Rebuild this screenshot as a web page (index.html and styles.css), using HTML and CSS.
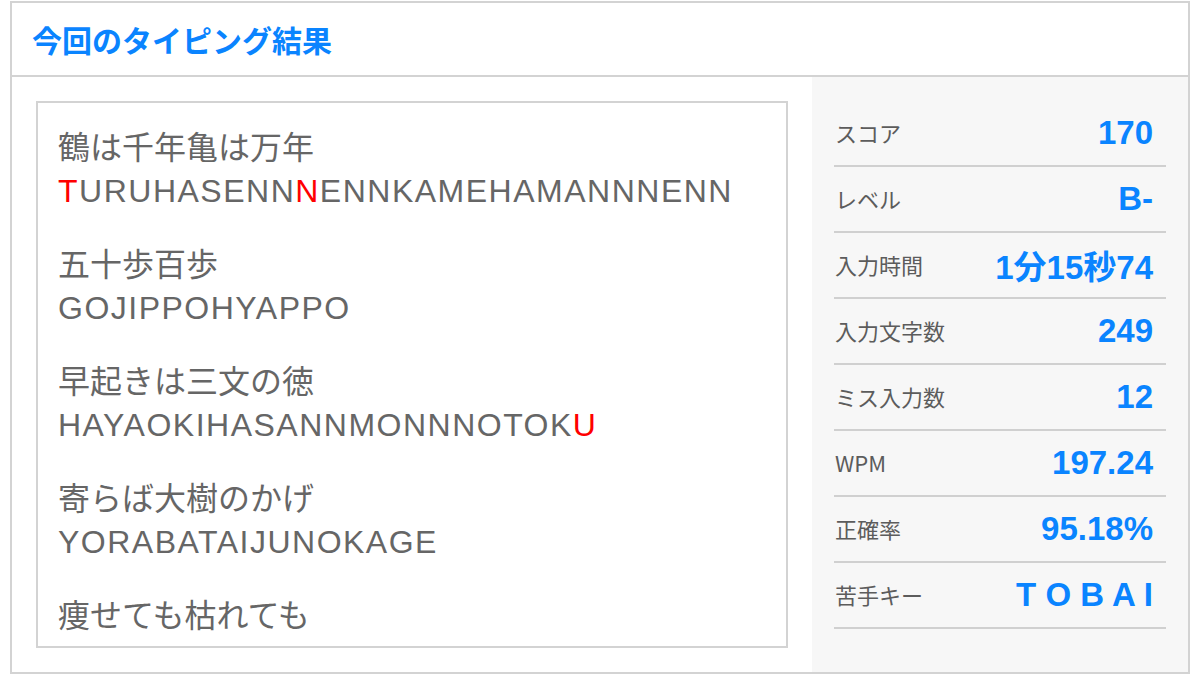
FILE: index.html
```html
<!DOCTYPE html>
<html lang="ja">
<head>
<meta charset="utf-8">
<title>今回のタイピング結果</title>
<link rel="stylesheet" href="styles.css">
</head>
<body>
<section class="card">
  <header class="card-head">
    <h1 class="card-title">今回のタイピング結果</h1>
  </header>
  <div class="card-body">
    <div class="words-col">
      <div class="words-box">
        <div class="word">
          <p class="word-ja">鶴は千年亀は万年</p>
          <p class="word-roma"><span class="miss">T</span>URUHASENN<span class="miss">N</span>ENNKAMEHAMANNNENN</p>
        </div>
        <div class="word">
          <p class="word-ja">五十歩百歩</p>
          <p class="word-roma">GOJIPPOHYAPPO</p>
        </div>
        <div class="word">
          <p class="word-ja">早起きは三文の徳</p>
          <p class="word-roma">HAYAOKIHASANNMONNNOTOK<span class="miss">U</span></p>
        </div>
        <div class="word">
          <p class="word-ja">寄らば大樹のかげ</p>
          <p class="word-roma">YORABATAIJUNOKAGE</p>
        </div>
        <div class="word">
          <p class="word-ja">痩せても枯れても</p>
        </div>
      </div>
    </div>
    <aside class="stats">
      <div class="stat"><span class="stat-label">スコア</span><span class="stat-value">170</span></div>
      <div class="stat"><span class="stat-label">レベル</span><span class="stat-value">B-</span></div>
      <div class="stat"><span class="stat-label">入力時間</span><span class="stat-value">1分15秒74</span></div>
      <div class="stat"><span class="stat-label">入力文字数</span><span class="stat-value">249</span></div>
      <div class="stat"><span class="stat-label">ミス入力数</span><span class="stat-value">12</span></div>
      <div class="stat"><span class="stat-label">WPM</span><span class="stat-value">197.24</span></div>
      <div class="stat"><span class="stat-label">正確率</span><span class="stat-value">95.18%</span></div>
      <div class="stat"><span class="stat-label">苦手キー</span><span class="stat-value">T O B A I</span></div>
    </aside>
  </div>
</section>
</body>
</html>
```
FILE: styles.css
```css
* {
  box-sizing: border-box;
}

html, body {
  margin: 0;
  padding: 0;
  background: #ffffff;
}

body {
  padding: 1px 0 0 10px;
  font-family: "Liberation Sans", "Noto Sans CJK JP", sans-serif;
}

.card {
  width: 1180px;
  height: 673px;
  border: 2px solid #d3d3d3;
  display: flex;
  flex-direction: column;
}

.card-head {
  height: 74px;
  border-bottom: 2px solid #d3d3d3;
  display: flex;
  align-items: center;
  padding-left: 20px;
}

.card-title {
  margin: 0;
  font-family: "Noto Sans CJK JP", sans-serif;
  font-weight: 700;
  font-size: 30px;
  line-height: 1;
  color: #0a84ff;
}

.card-body {
  flex: 1;
  display: flex;
  min-height: 0;
}

.words-col {
  width: 800px;
  padding: 24px;
}

.words-box {
  height: 100%;
  border: 2px solid #d3d3d3;
  padding: 19px 20px;
  overflow: hidden;
}

.word {
  margin-bottom: 25px;
}

.word p {
  margin: 0;
  font-size: 32px;
  line-height: 46px;
  color: #666666;
  white-space: nowrap;
}

.word-ja {
  font-family: "Noto Sans CJK JP", sans-serif;
}

.word-roma {
  font-family: "Liberation Sans", "Noto Sans CJK JP", sans-serif;
  letter-spacing: 1.5px;
}

.miss {
  color: #ff0000;
}

.stats {
  flex: 1;
  background: #f7f7f7;
  padding: 24px 22px;
}

.stat {
  height: 66px;
  border-bottom: 2px solid #d0d0d0;
  display: flex;
  align-items: center;
  justify-content: space-between;
  padding: 0 13px 0 1px;
}

.stat-label {
  font-family: "Noto Sans CJK JP", sans-serif;
  font-size: 22px;
  color: #5c5c5c;
  position: relative;
  top: -1px;
}

.stat-value {
  font-family: "Liberation Sans", "Noto Sans CJK JP", sans-serif;
  font-weight: 700;
  font-size: 33px;
  color: #0a84ff;
  white-space: pre;
}
```
